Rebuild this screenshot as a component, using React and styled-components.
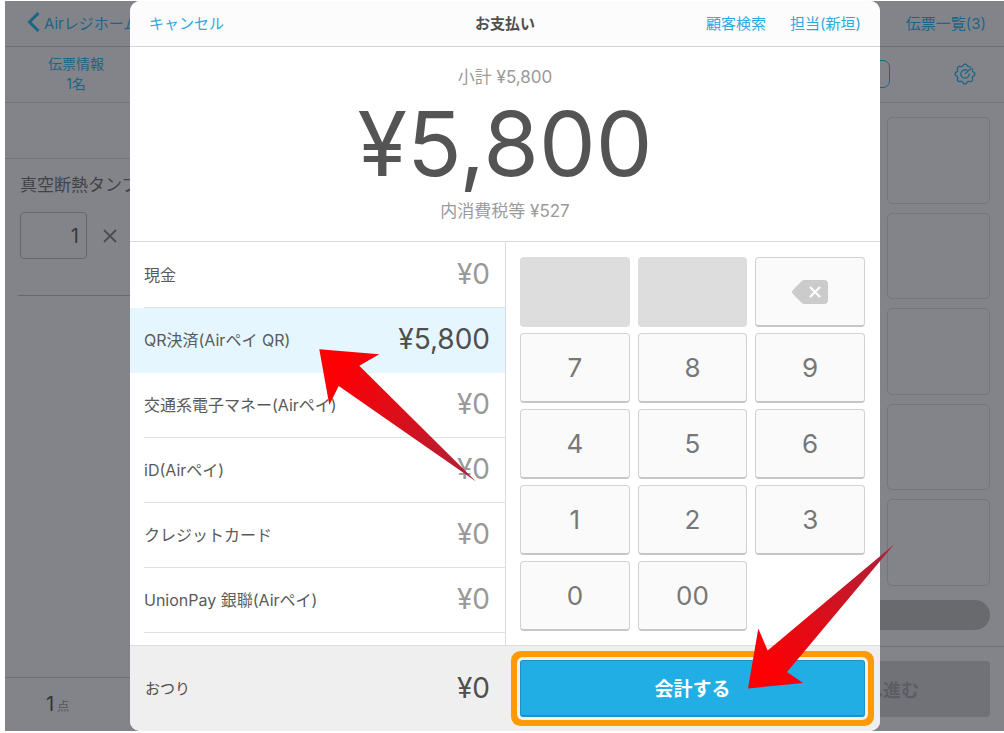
import { useState } from "react";
import styled, { createGlobalStyle, css } from "styled-components";

const GlobalStyle = createGlobalStyle`
  * {
    box-sizing: border-box;
  }

  body {
    margin: 0;
    background: #fff;
    color: #4f4f4f;
    font-family: Inter, "Noto Sans CJK JP", sans-serif;
    font-size: 15px;
  }

  button, input {
    font-family: inherit;
  }

  h1, p, ul {
    margin: 0;
    padding: 0;
  }
`;

const plainButton = css`
  padding: 0;
  border: none;
  background: none;
  cursor: pointer;
`;

const Page = styled.div`
  display: grid;
  min-height: 100vh;
  padding: 1px 0 2px 5px;
`;

const Screen = styled.div`
  position: relative;
  display: grid;
  overflow: hidden;
`;

/* ---------- register screen behind the dialog ---------- */

const Register = styled.div`
  display: flex;
  flex-direction: column;
  background: #838489;
  color: #414246;
`;

const RegisterHeader = styled.header`
  display: flex;
  align-items: center;
  justify-content: space-between;
  height: 46px;
  padding: 0 18px 3px 22px;
  border-bottom: 1px solid #6d6e72;
`;

const DimLink = styled.a`
  display: flex;
  align-items: center;
  gap: 4px;
  color: #1b6685;
  font-size: 15px;
  text-decoration: none;
  white-space: nowrap;
`;

const RegisterBody = styled.div`
  flex: 1;
  display: grid;
  grid-template-columns: 3fr 5fr;
`;

const Order = styled.section`
  display: flex;
  flex-direction: column;
`;

const OrderInfo = styled.button`
  ${plainButton}
  height: 56px;
  padding: 0 0 2px 43px;
  border-bottom: 1px solid #727377;
  color: #1b6685;
  font-size: 14px;
  line-height: 20px;
  text-align: left;

  span {
    display: block;
    width: 56px;
    text-align: center;
  }
`;

const OrderBlank = styled.div`
  height: 56px;
  border-bottom: 1px solid #727377;
`;

const OrderItem = styled.div`
  height: 137px;
  margin-left: 13px;
  padding: 14px 0 0 2px;
  border-bottom: 1px solid #67686c;

  p {
    font-size: 17px;
    line-height: 24px;
    white-space: nowrap;
  }
`;

const Quantity = styled.label`
  display: flex;
  align-items: center;
  gap: 16px;
  margin-top: 15px;

  input {
    width: 67px;
    height: 47px;
    padding: 0 7px;
    border: 1px solid #66676b;
    border-radius: 4px;
    background: none;
    color: #38393c;
    font-size: 20px;
    text-align: right;
  }
`;

const OrderTotal = styled.p`
  margin-top: auto !important;
  height: 54px;
  padding-left: 41px;
  border-top: 1px solid #6d6e72;
  color: #333437;
  font-size: 20px;
  line-height: 52px;

  small {
    margin-left: 3px;
    color: #55565a;
    font-size: 12px;
  }
`;

const Menu = styled.section`
  display: flex;
  flex-direction: column;
`;

const MenuBar = styled.div`
  display: flex;
  align-items: center;
  justify-content: flex-end;
  gap: 64px;
  height: 56px;
  padding: 0 28px 2px 0;
  border-bottom: 1px solid #727377;
`;

const CategoryButton = styled.button`
  ${plainButton}
  width: 120px;
  height: 28px;
  border: 1px solid #1b6685;
  border-radius: 7px;
`;

const GearButton = styled.button`
  ${plainButton}
  display: flex;
  color: #1b6685;
`;

const Tiles = styled.div`
  flex: 1;
  display: flex;
  flex-direction: column;
  align-items: flex-end;
  gap: 9px;
  padding: 14px 14px 0;
`;

const Tile = styled.button`
  ${plainButton}
  flex: 1;
  width: 103px;
  border: 1px solid #75767b;
  border-radius: 5px;
`;

const Pager = styled.div`
  height: 30px;
  margin: 14px 14px 16px;
  border-radius: 15px;
  background: #696a6e;
`;

const MenuFooter = styled.div`
  display: flex;
  justify-content: flex-end;
  padding: 14px;
  border-top: 1px solid #6f7074;
`;

const ProceedButton = styled.button`
  ${plainButton}
  width: 232px;
  height: 56px;
  border-radius: 4px;
  background: #717277;
  color: #5c5d61;
  font-size: 18px;
  font-weight: 700;
`;

/* ---------- payment dialog ---------- */

const Overlay = styled.div`
  position: absolute;
  inset: 0;
  display: grid;
  padding: 0 124px 0 125px;
`;

const Dialog = styled.div`
  position: relative;
  display: flex;
  flex-direction: column;
  border-radius: 10px;
  background: #fff;
`;

const DialogHeader = styled.header`
  display: grid;
  grid-template-columns: 1fr auto 1fr;
  align-items: center;
  height: 46px;
  padding: 0 19px 3px;
  border-bottom: 1px solid #d5d5d7;
  border-radius: 10px 10px 0 0;
  background: #fcfcfc;

  h1 {
    font-size: 15px;
    font-weight: 700;
  }
`;

const HeaderActions = styled.div`
  display: flex;
  justify-content: ${(p) => (p.$end ? "flex-end" : "flex-start")};
  gap: 24px;
`;

const TextButton = styled.button`
  ${plainButton}
  color: #2caadf;
  font-size: 15px;
`;

const Summary = styled.section`
  padding: 18px 0;
  border-bottom: 1px solid #d9dadc;
  text-align: center;
`;

const SummaryNote = styled.p`
  color: #9a9a9a;
  font-size: 17px;
  line-height: 24px;
`;

const Total = styled.p`
  color: #545454;
  font-size: 90px;
  line-height: 110px;
`;

const DialogBody = styled.div`
  flex: 1;
  display: grid;
  grid-template-columns: 1fr 1fr;
`;

const Methods = styled.ul`
  padding-top: 1px;
  list-style: none;
`;

const Method = styled.button`
  ${plainButton}
  display: block;
  width: 100%;
  height: 65px;
  padding-left: 14px;
  background: ${(p) => (p.$active ? "#e5f6fe" : "#fff")};
  color: #5a5a5a;
  font-size: 16px;

  > span {
    display: flex;
    align-items: center;
    justify-content: space-between;
    height: 100%;
    padding: 0 15px 2px 0;
    border-bottom: 1px solid ${(p) => (p.$active ? "#e5f6fe" : "#dfe2e3")};
  }
`;

const Amount = styled.span`
  color: ${(p) => (p.$strong ? "#4f4f4f" : "#999")};
  font-size: 28px;
`;

const Keypad = styled.div`
  display: grid;
  grid-template-columns: repeat(3, 1fr);
  grid-auto-rows: 70px;
  align-content: start;
  gap: 6px 8px;
  padding: 15px 15px 14px 14px;
  border-left: 1px solid #dadcdd;
`;

const Key = styled.button`
  ${plainButton}
  display: flex;
  align-items: center;
  justify-content: center;
  border: 1px solid #d2d2d2;
  border-bottom: 2px solid #c6c6c6;
  border-radius: 4px;
  background: #fafafa;
  color: #777;
  font-size: 26px;

  &:disabled {
    border-color: #ddd;
    background: #ddd;
    cursor: default;
  }
`;

const DialogFooter = styled.footer`
  display: grid;
  grid-template-columns: 1fr 1fr;
  border-top: 1px solid #dcdcdc;
  border-radius: 0 0 10px 10px;
  background: #efefef;
`;

const Change = styled.div`
  display: flex;
  align-items: center;
  justify-content: space-between;
  padding: 0 15px 2px 15px;
`;

const PayArea = styled.div`
  display: grid;
  padding: 14px 15px 14px 15px;
`;

const PayButton = styled.button`
  ${plainButton}
  height: 57px;
  padding-bottom: 2px;
  border: 1px solid #1b93c6;
  border-bottom-width: 2px;
  border-radius: 3px;
  background: #20aee5;
  box-shadow: 0 0 0 3px #f4f1ec, 0 0 0 9px #ff9a05;
  color: #fff;
  font-size: 19px;
  font-weight: 700;
`;

const Pointer = styled.svg`
  position: absolute;
  pointer-events: none;
`;

const MethodPointer = styled(Pointer)`
  top: 348px;
  left: 189px;
`;

const PayPointer = styled(Pointer)`
  right: -14px;
  bottom: 42px;
`;

const methods = [
  { id: "cash", name: "現金", amount: 0 },
  { id: "qr", name: "QR決済(Airペイ QR)", amount: 5800 },
  { id: "transit", name: "交通系電子マネー(Airペイ)", amount: 0 },
  { id: "id", name: "iD(Airペイ)", amount: 0 },
  { id: "credit", name: "クレジットカード", amount: 0 },
  { id: "unionpay", name: "UnionPay 銀聯(Airペイ)", amount: 0 },
];

const keys = ["7", "8", "9", "4", "5", "6", "1", "2", "3", "0", "00"];

const yen = (value) => `¥${value.toLocaleString("en-US")}`;

// outline of a gear with eight soft teeth, open at the upper right
const gearPath = () => {
  const points = [];
  for (let i = 0; i <= 90; i++) {
    const a = (i / 96) * Math.PI * 2 - 0.6;
    const wave = Math.tanh(1.6 * Math.cos(a * 8));
    const r = 9 + 0.9 * wave;
    points.push(`${(11 + r * Math.cos(a)).toFixed(2)} ${(11 + r * Math.sin(a)).toFixed(2)}`);
  }
  return `M${points.join("L")}`;
};

function GearIcon() {
  return (
    <svg width="22" height="22" viewBox="0 0 22 22" fill="none" stroke="currentColor" strokeWidth="1.3" strokeLinejoin="round" strokeLinecap="round">
      <path d={gearPath()} />
      <path d="M13 7.3A4.200 4.200 0 1 0 15.200 11" />
      <path d="M11.500 10.500L17.300 4.900" />
    </svg>
  );
}

function BackspaceIcon() {
  return (
    <svg width="36" height="24" viewBox="0 0 36 24">
      <path
        d="M12.500 0H32a4 4 0 0 1 4 4v16a4 4 0 0 1-4 4H12.500a4 4 0 0 1-2.700-1.100L1 14a2.700 2.700 0 0 1 0-4L9.800 1.100A4 4 0 0 1 12.500 0z"
        fill="#cbcbcb"
      />
      <path d="M18 7l10 10M28 7L18 17" stroke="#fff" strokeWidth="2.200" />
    </svg>
  );
}

function RegisterScreen() {
  return (
    <Register>
      <RegisterHeader>
        <DimLink href="#home">
          <svg width="13" height="20" viewBox="0 0 13 20" fill="none" stroke="currentColor" strokeWidth="3">
            <path d="M11.500 1L2.500 10l9 9" />
          </svg>
          Airレジホーム
        </DimLink>
        <DimLink href="#slips">伝票一覧(3)</DimLink>
      </RegisterHeader>
      <RegisterBody>
        <Order>
          <OrderInfo>
            <span>伝票情報</span>
            <span>1名</span>
          </OrderInfo>
          <OrderBlank />
          <OrderItem>
            <p>真空断熱タンブラー</p>
            <Quantity>
              <input aria-label="数量" defaultValue="1" />
              <svg width="14" height="14" viewBox="0 0 14 14" stroke="#4c4d51" strokeWidth="1.800">
                <path d="M1 1l12 12M13 1L1 13" />
              </svg>
            </Quantity>
          </OrderItem>
          <OrderTotal>
            1<small>点</small>
          </OrderTotal>
        </Order>
        <Menu>
          <MenuBar>
            <CategoryButton aria-label="カテゴリー" />
            <GearButton aria-label="設定">
              <GearIcon />
            </GearButton>
          </MenuBar>
          <Tiles>
            {[1, 2, 3, 4, 5].map((n) => (
              <Tile key={n} aria-label={`商品${n}`} />
            ))}
          </Tiles>
          <Pager />
          <MenuFooter>
            <ProceedButton>会計へ進む</ProceedButton>
          </MenuFooter>
        </Menu>
      </RegisterBody>
    </Register>
  );
}

function Pointers() {
  return (
    <>
      <MethodPointer width="158" height="134" viewBox="0 0 158 134">
        <defs>
          <linearGradient id="methodRed" gradientUnits="userSpaceOnUse" x1="20" y1="20" x2="150" y2="128">
            <stop offset="0" stopColor="#fd0004" />
            <stop offset="1" stopColor="#b02037" />
          </linearGradient>
        </defs>
        <path d="M0.300 0.300L60.300 5.300L40.300 16.700L157 132.500L19.700 37L10.300 56Z" fill="url(#methodRed)" />
      </MethodPointer>
      <PayPointer width="146" height="145" viewBox="0 0 146 145">
        <defs>
          <linearGradient id="payRed" gradientUnits="userSpaceOnUse" x1="20" y1="125" x2="138" y2="8">
            <stop offset="0" stopColor="#fd0004" />
            <stop offset="1" stopColor="#b02037" />
          </linearGradient>
        </defs>
        <path d="M0 144.500L55 139L39 128L146 0.500L19.700 106.500L10.300 84.500Z" fill="url(#payRed)" />
      </PayPointer>
    </>
  );
}

function PaymentDialog() {
  const [selected, setSelected] = useState("qr");

  return (
    <Dialog role="dialog" aria-labelledby="payment-title">
      <DialogHeader>
        <HeaderActions>
          <TextButton>キャンセル</TextButton>
        </HeaderActions>
        <h1 id="payment-title">お支払い</h1>
        <HeaderActions $end>
          <TextButton>顧客検索</TextButton>
          <TextButton>担当(新垣)</TextButton>
        </HeaderActions>
      </DialogHeader>
      <Summary>
        <SummaryNote>小計 {yen(5800)}</SummaryNote>
        <Total>{yen(5800)}</Total>
        <SummaryNote>内消費税等 {yen(527)}</SummaryNote>
      </Summary>
      <DialogBody>
        <Methods>
          {methods.map((m) => (
            <li key={m.id}>
              <Method $active={m.id === selected} onClick={() => setSelected(m.id)}>
                <span>
                  {m.name}
                  <Amount $strong={m.amount > 0}>{yen(m.amount)}</Amount>
                </span>
              </Method>
            </li>
          ))}
        </Methods>
        <Keypad>
          <Key disabled aria-label="未使用" />
          <Key disabled aria-label="未使用" />
          <Key aria-label="削除">
            <BackspaceIcon />
          </Key>
          {keys.map((k) => (
            <Key key={k}>{k}</Key>
          ))}
        </Keypad>
      </DialogBody>
      <DialogFooter>
        <Change>
          おつり
          <Amount $strong>{yen(0)}</Amount>
        </Change>
        <PayArea>
          <PayButton>会計する</PayButton>
        </PayArea>
      </DialogFooter>
      <Pointers />
    </Dialog>
  );
}

export default function App() {
  return (
    <Page>
      <GlobalStyle />
      <Screen>
        <RegisterScreen />
        <Overlay>
          <PaymentDialog />
        </Overlay>
      </Screen>
    </Page>
  );
}
